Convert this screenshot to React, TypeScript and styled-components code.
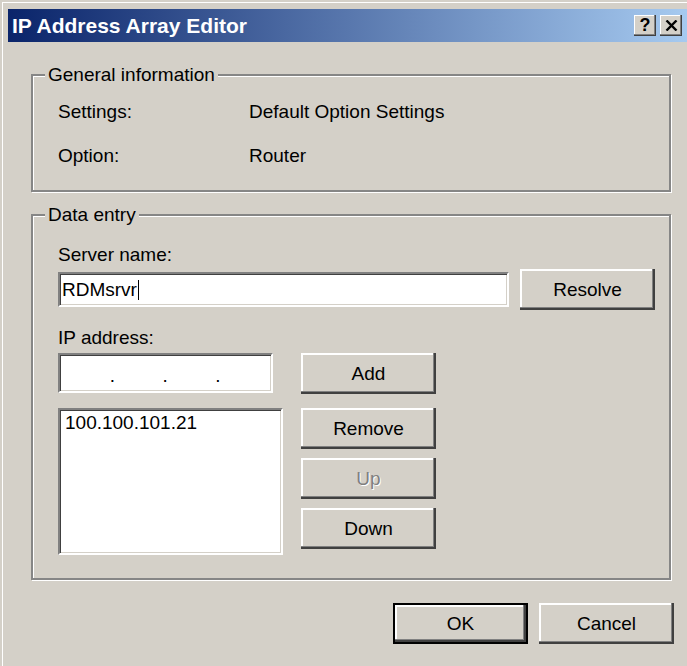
import React from "react";
import styled, { createGlobalStyle, css } from "styled-components";

const GlobalStyle = createGlobalStyle`
  html, body {
    margin: 0;
    padding: 0;
    background: #d4d0c8;
    overflow: hidden;
  }
  body {
    font-family: "Liberation Sans", Arial, sans-serif;
  }
`;

const Window = styled.div`
  width: 687px;
  height: 666px;
  box-sizing: border-box;
  padding: 9px 0 0 8px;
  background: #d4d0c8;
  box-shadow: inset 2px 2px 0 #d4d0c8, inset 3px 3px 0 #ffffff;
  display: flex;
  flex-direction: column;
`;

const TitleBar = styled.div`
  height: 33px;
  flex: none;
  display: flex;
  align-items: center;
  padding: 0 5px 0 4px;
  background: linear-gradient(90deg, #0a246a 0%, #a6caf0 100%);
  color: #ffffff;
  font-weight: bold;
  font-size: 21px;
`;

const Title = styled.span`
  flex: 1;
  white-space: nowrap;
`;

const CaptionButtons = styled.div`
  display: flex;
  gap: 4px;
`;

const CaptionButton = styled.div`
  width: 22px;
  height: 21px;
  box-sizing: border-box;
  background: #d4d0c8;
  box-shadow: inset -1px -1px 0 #404040, inset -2px -2px 0 #808080,
    inset 1px 1px 0 #ffffff;
  display: flex;
  align-items: center;
  justify-content: center;
  color: #000;
  font-size: 18px;
  font-weight: bold;
  line-height: 1;
  padding-bottom: 1px;
`;

const Body = styled.div`
  flex: 1;
  display: flex;
  flex-direction: column;
  padding: 22px 16px 0 23px;
  font-size: 19px;
  line-height: 22px;
  color: #000;
`;

const Group = styled.fieldset<{ $gapTop?: number }>`
  margin: ${(p) => p.$gapTop ?? 0}px 0 0 0;
  padding: 0 14px 23px 12px;
  min-width: 0;
  border: 2px solid #868686;
  box-shadow: inset 1px 1px 0 #ffffff, 1px 1px 0 #ffffff;
`;

const Legend = styled.legend`
  padding: 0 3px;
  background: #d4d0c8;
  line-height: 22px;
`;

const InfoGrid = styled.div`
  display: grid;
  grid-template-columns: 191px 1fr;
  row-gap: 22px;
  padding: 15px 0 0 13px;
`;

const EntryArea = styled.div`
  display: flex;
  flex-direction: column;
  padding: 18px 0 0 13px;
`;

const FieldLabel = styled.div<{ $gapTop?: number }>`
  margin-top: ${(p) => p.$gapTop ?? 0}px;
  margin-bottom: ${(p) => (p.$gapTop ? 4 : 3)}px;
`;

const ServerRow = styled.div`
  display: flex;
  align-items: center;
  gap: 11px;
`;

const sunken = css`
  box-sizing: border-box;
  background: #ffffff;
  border: 2px solid;
  border-color: #808080 #ffffff #ffffff #808080;
  box-shadow: inset 1px 1px 0 #404040, inset -1px -1px 0 #d4d0c8;
`;

const TextField = styled.div`
  ${sunken};
  flex: 1;
  height: 35px;
  display: flex;
  align-items: center;
  padding-left: 2px;
`;

const Caret = styled.span`
  display: inline-block;
  width: 1px;
  height: 20px;
  margin-left: 1px;
  background: #000;
`;

const LowerGrid = styled.div`
  display: grid;
  grid-template-columns: 225px 135px;
  column-gap: 18px;
  row-gap: 14px;
  align-items: start;
`;

const IpField = styled.div`
  ${sunken};
  width: 215px;
  height: 40px;
  display: flex;
  align-items: center;
  padding: 0 3px 0 1px;
`;

const IpSegment = styled.span`
  flex: 1;
`;

const IpDot = styled.span`
  width: 4px;
  text-align: center;
  padding-top: 6px;
`;

const ListBox = styled.div`
  ${sunken};
  height: 147px;
  padding: 2px 5px;
`;

const ButtonColumn = styled.div`
  display: flex;
  flex-direction: column;
  gap: 9px;
`;

const Button = styled.button<{ $default?: boolean }>`
  width: 135px;
  height: 41px;
  box-sizing: border-box;
  margin: 0;
  padding: 0;
  font-family: inherit;
  font-size: 19px;
  color: #000;
  background: #d4d0c8;
  border: none;
  box-shadow: inset -2px -2px 0 #404040, inset -3px -3px 0 #808080,
    inset 2px 2px 0 #ffffff;
  ${(p) =>
    p.$default &&
    css`
      border: 2px solid #000;
    `}
  &:disabled {
    color: #808080;
    text-shadow: 1px 1px 0 #ffffff;
  }
`;

const Footer = styled.div`
  display: flex;
  justify-content: flex-end;
  gap: 11px;
  margin: 23px -3px 0 0;
`;

const CloseGlyph = () => (
  <svg width="13" height="11" viewBox="0 0 13 11">
    <path d="M1.5 0.5 L11.5 10.5 M11.5 0.5 L1.5 10.5" stroke="#000" strokeWidth="2.4" />
  </svg>
);

export default function App() {
  return (
    <>
      <GlobalStyle />
      <Window>
        <TitleBar>
          <Title>IP Address Array Editor</Title>
          <CaptionButtons>
            <CaptionButton>?</CaptionButton>
            <CaptionButton>
              <CloseGlyph />
            </CaptionButton>
          </CaptionButtons>
        </TitleBar>
        <Body>
          <Group>
            <Legend>General information</Legend>
            <InfoGrid>
              <span>Settings:</span>
              <span>Default Option Settings</span>
              <span>Option:</span>
              <span>Router</span>
            </InfoGrid>
          </Group>
          <Group $gapTop={12}>
            <Legend>Data entry</Legend>
            <EntryArea>
              <FieldLabel>Server name:</FieldLabel>
              <ServerRow>
                <TextField>
                  RDMsrvr
                  <Caret />
                </TextField>
                <Button>Resolve</Button>
              </ServerRow>
              <FieldLabel $gapTop={17}>IP address:</FieldLabel>
              <LowerGrid>
                <IpField>
                  <IpSegment />
                  <IpDot>.</IpDot>
                  <IpSegment />
                  <IpDot>.</IpDot>
                  <IpSegment />
                  <IpDot>.</IpDot>
                  <IpSegment />
                </IpField>
                <Button>Add</Button>
                <ListBox>100.100.101.21</ListBox>
                <ButtonColumn>
                  <Button>Remove</Button>
                  <Button disabled>Up</Button>
                  <Button>Down</Button>
                </ButtonColumn>
              </LowerGrid>
            </EntryArea>
          </Group>
          <Footer>
            <Button $default>OK</Button>
            <Button>Cancel</Button>
          </Footer>
        </Body>
      </Window>
    </>
  );
}
